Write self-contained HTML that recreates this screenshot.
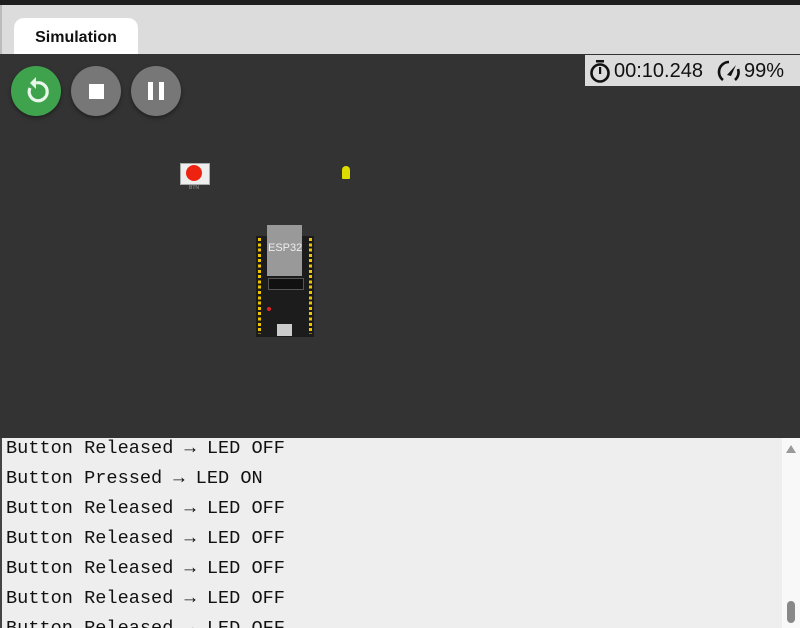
<!DOCTYPE html>
<html><head><style>
body{margin:0;width:800px;height:628px;overflow:hidden;background:#333;font-family:"Liberation Sans",sans-serif;position:relative}
.top{position:absolute;left:0;top:0;width:800px;height:5px;background:#1e1e1e}
.tabbar{position:absolute;left:0;top:5px;width:800px;height:49px;background:#dcdcdc;border-left:2px solid #bbb;box-sizing:border-box}
.tab{position:absolute;left:14px;top:18px;width:124px;height:36px;background:#fff;border-radius:10px 10px 0 0;font-weight:bold;font-size:16px;text-align:center;line-height:40px;color:#111}
.canvas{position:absolute;left:0;top:54px;width:800px;height:384px;background:#333}
.btn{position:absolute;top:66px;width:50px;height:50px;border-radius:50%;box-shadow:0 2px 4px rgba(0,0,0,.4)}
.timer{position:absolute;left:585px;top:55px;width:215px;height:31px;background:#dcdcdc;font-size:20px;color:#111}
.console{position:absolute;left:0;top:438px;width:800px;height:190px;background:#eee;border-left:2px solid #444;box-sizing:border-box;overflow:hidden}
.console pre{margin:0;padding:0 0 0 4px;font-family:"Liberation Mono",monospace;font-size:18.6px;line-height:30px;color:#111;position:relative;top:-4px}
.sb{position:absolute;right:0;top:0;width:18px;height:190px;background:#f8f8f8}
</style></head><body>
<div class="top"></div>
<div class="tabbar"></div>
<div class="tab">Simulation</div>
<div class="canvas"></div>
<div class="btn" style="left:11px;background:#3fa34d"><svg width="50" height="50" viewBox="0 0 50 50"><path d="M19 22 A9 9 0 1 0 25 17" fill="none" stroke="#e8f5e9" stroke-width="3.2"/><path d="M25 11 L25 23 L19 17 Z" fill="#e8f5e9"/></svg></div>
<div class="btn" style="left:71px;background:#777"><div style="position:absolute;left:18px;top:18px;width:15px;height:15px;background:#fff"></div></div>
<div class="btn" style="left:131px;background:#777"><div style="position:absolute;left:17px;top:16px;width:5px;height:18px;background:#fff"></div><div style="position:absolute;left:28px;top:16px;width:5px;height:18px;background:#fff"></div></div>
<div class="timer">
<svg style="position:absolute;left:3px;top:4px" width="24" height="24" viewBox="0 0 24 24"><rect x="8" y="1" width="8" height="2.5" fill="#111"/><circle cx="12" cy="14" r="8.5" fill="none" stroke="#111" stroke-width="2.6"/><rect x="11" y="8" width="2.2" height="7" fill="#111"/></svg>
<span style="position:absolute;left:29px;top:5px">00:10.248</span>
<svg style="position:absolute;left:131px;top:4px" width="26" height="24" viewBox="0 0 26 24"><path d="M7 21 A10 10 0 0 1 13 3 M19 21 A10 10 0 0 0 22 10" fill="none" stroke="#111" stroke-width="2.6"/><path d="M11 16 L20 6 L15 17 Z" fill="#111"/></svg>
<span style="position:absolute;left:159px;top:5px">99%</span>
</div>
<div style="position:absolute;left:180px;top:163px;width:28px;height:20px;background:#eee;border:1px solid #aaa"></div>
<div style="position:absolute;left:186px;top:165px;width:16px;height:16px;border-radius:50%;background:#e21"></div>
<div style="position:absolute;left:189px;top:185px;font-size:5px;color:#999">BTN</div>
<div style="position:absolute;left:342px;top:166px;width:8px;height:13px;border-radius:4px 4px 1px 1px;background:#dd0"></div>
<div style="position:absolute;left:256px;top:236px;width:58px;height:101px;background:#1c1c1c;"></div>
<div style="position:absolute;left:258px;top:238px;width:3px;height:96px;background:repeating-linear-gradient(#eec500 0 3px,transparent 3px 5.3px)"></div>
<div style="position:absolute;left:309px;top:238px;width:3px;height:96px;background:repeating-linear-gradient(#eec500 0 3px,transparent 3px 5.3px)"></div>
<div style="position:absolute;left:267px;top:225px;width:35px;height:51px;background:#999"></div>
<div style="position:absolute;left:268px;top:242px;font-size:11px;color:#eee">ESP32</div>
<div style="position:absolute;left:268px;top:278px;width:34px;height:10px;background:#111;border:1px solid #555"></div>
<div style="position:absolute;left:277px;top:324px;width:15px;height:12px;background:#ccc"></div>
<div style="position:absolute;left:267px;top:307px;width:4px;height:4px;border-radius:50%;background:#d22"></div>
<div class="console"><pre>Button Released → LED OFF
Button Pressed → LED ON
Button Released → LED OFF
Button Released → LED OFF
Button Released → LED OFF
Button Released → LED OFF
Button Released → LED OFF</pre>
<div class="sb"><div style="position:absolute;left:4px;top:7px;width:0;height:0;border-left:5px solid transparent;border-right:5px solid transparent;border-bottom:8px solid #999"></div><div style="position:absolute;left:5px;top:163px;width:8px;height:22px;border-radius:4px;background:#888"></div></div>
</div>
</body></html>
